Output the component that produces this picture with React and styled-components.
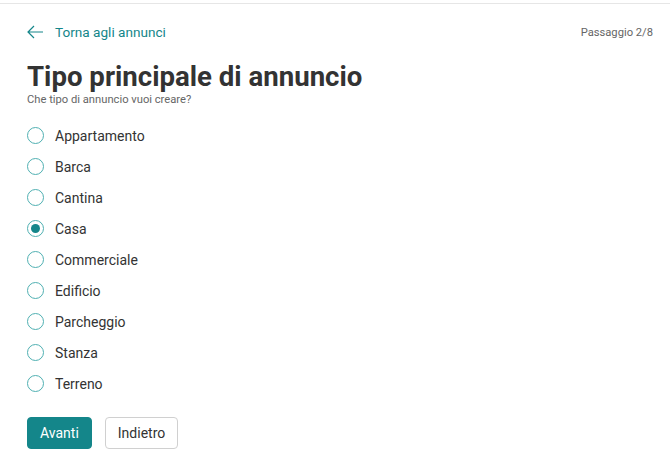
import React, { useState } from 'react';
import styled, { createGlobalStyle } from 'styled-components';

const teal = '#14868a';
const text = '#333333';

const GlobalStyle = createGlobalStyle`
  body {
    margin: 0;
    background: #ffffff;
    font-family: Roboto, "Noto Sans", sans-serif;
    color: ${text};
  }
`;

const Page = styled.div`
  margin-top: 3px;
  border-top: 1px solid #e6e6e6;
  padding: 0 17px 0 27px;
`;

const TopBar = styled.div`
  display: flex;
  align-items: center;
  justify-content: space-between;
  height: 56px;
`;

const BackLink = styled.a`
  display: flex;
  align-items: center;
  gap: 11px;
  color: ${teal};
  font-size: 13.6px;
  text-decoration: none;
  cursor: pointer;
`;

const Step = styled.span`
  font-size: 11.2px;
  color: #666;
`;

const Title = styled.h1`
  margin: 0;
  font-size: 27.6px;
  font-weight: 700;
  line-height: 34px;
  color: ${text};
`;

const Subtitle = styled.p`
  margin: -1px 0 0;
  font-size: 11.2px;
  line-height: 14px;
  color: #666;
`;

const Options = styled.div`
  display: flex;
  flex-direction: column;
  margin-top: 13px;
`;

const Option = styled.label`
  display: flex;
  align-items: center;
  gap: 11px;
  height: 31px;
  font-size: 14px;
  color: ${text};
  cursor: pointer;
`;

const Radio = styled.span`
  box-sizing: border-box;
  width: 17px;
  height: 17px;
  border-radius: 50%;
  border: 1.6px solid #4fb0b2;
  display: flex;
  align-items: center;
  justify-content: center;
  &::after {
    content: '';
    width: 9px;
    height: 9px;
    border-radius: 50%;
    background: ${teal};
    display: ${props => (props.checked ? 'block' : 'none')};
  }
`;

const Actions = styled.div`
  display: flex;
  gap: 13px;
  margin-top: 18px;
`;

const Button = styled.button`
  box-sizing: border-box;
  height: 32px;
  padding: 0 12px;
  border-radius: 4px;
  font-family: inherit;
  font-size: 14px;
  cursor: pointer;
  background: ${props => (props.primary ? teal : '#fff')};
  color: ${props => (props.primary ? '#fff' : text)};
  border: 1px solid ${props => (props.primary ? teal : '#d0d0d0')};
`;

const types = [
  'Appartamento',
  'Barca',
  'Cantina',
  'Casa',
  'Commerciale',
  'Edificio',
  'Parcheggio',
  'Stanza',
  'Terreno',
];

export default function App() {
  const [selected, setSelected] = useState('Casa');

  return (
    <Page>
      <GlobalStyle />
      <TopBar>
        <BackLink>
          <svg width="17" height="14" viewBox="0 0 17 14" fill="none" stroke={teal} strokeWidth="1.2">
            <path d="M16 7H1M7 1L1 7l6 6" />
          </svg>
          Torna agli annunci
        </BackLink>
        <Step>Passaggio 2/8</Step>
      </TopBar>
      <Title>Tipo principale di annuncio</Title>
      <Subtitle>Che tipo di annuncio vuoi creare?</Subtitle>
      <Options>
        {types.map(t => (
          <Option key={t} onClick={() => setSelected(t)}>
            <Radio checked={selected === t} />
            {t}
          </Option>
        ))}
      </Options>
      <Actions>
        <Button primary>Avanti</Button>
        <Button>Indietro</Button>
      </Actions>
    </Page>
  );
}
